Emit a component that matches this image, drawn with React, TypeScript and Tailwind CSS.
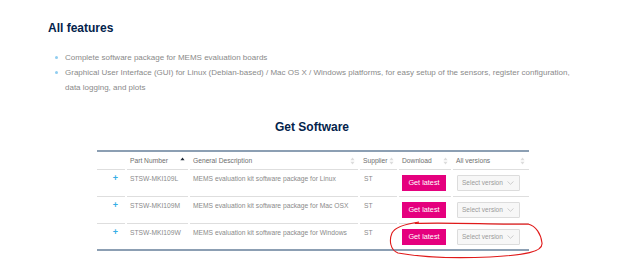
const rows = [
    { part: "STSW-MKI109L", desc: "MEMS evaluation kit software package for Linux" },
    { part: "STSW-MKI109M", desc: "MEMS evaluation kit software package for Mac OSX" },
    { part: "STSW-MKI109W", desc: "MEMS evaluation kit software package for Windows" },
]

const SortIcon = ({ active }: { active?: boolean }) => (
    <svg width="5" height="8" viewBox="0 0 5 8" className="shrink-0">
        <path d="M2.5 0.6 L4.6 3.2 H0.4Z" fill={active ? "#1f2937" : "#dcdcdc"} />
        {!active && <path d="M2.5 7.4 L4.6 4.8 H0.4Z" fill="#dcdcdc" />}
    </svg>
)

const Chevron = () => (
    <svg width="7" height="4" viewBox="0 0 7 4">
        <polyline points="0.5,0.5 3.5,3.3 6.5,0.5" fill="none" stroke="#c4c4c4" strokeWidth="0.8" />
    </svg>
)

const HeadCell = ({ label, active, last }: { label?: string; active?: boolean; last?: boolean }) => (
    <th className="h-[18px] border-b border-[#dedede] p-0 align-middle font-normal">
        {label && (
            <div className={`flex items-center justify-between pl-[3px] ${last ? "pr-[4px]" : "pr-[3px]"}`}>
                <span className="text-[6.7px] leading-[9px] text-[#6e6e6e]">{label}</span>
                <SortIcon active={active} />
            </div>
        )}
    </th>
)

const App = () => {
    return (
        <div className="relative h-[269px] w-[624px] overflow-hidden bg-white pt-[20px] pl-[48px] pr-[40px] font-['Liberation_Sans',Arial,sans-serif]">
            <h2 className="text-[12px] leading-[16px] font-bold text-[#03234b]">All features</h2>

            <ul className="mt-[14px] text-[8px] leading-[15px] text-[#8a8a8a]">
                <li className="flex">
                    <span className="mt-[6px] ml-[6.5px] mr-[7.5px] h-[3px] w-[3px] shrink-0 rounded-full bg-[#8fcdf0]" />
                    <span>Complete software package for MEMS evaluation boards</span>
                </li>
                <li className="flex">
                    <span className="mt-[6px] ml-[6.5px] mr-[7.5px] h-[3px] w-[3px] shrink-0 rounded-full bg-[#8fcdf0]" />
                    <span>
                        Graphical User Interface (GUI) for Linux (Debian-based) / Mac OS X / Windows platforms, for easy setup of the sensors, register configuration, data logging, and plots
                    </span>
                </li>
            </ul>

            <h3 className="-ml-[8px] mt-[24px] text-center text-[12px] leading-[16px] font-bold text-[#03234b]">Get Software</h3>

            {/* tabella download */}
            <div className="mt-[15px] ml-[49px] w-[432px] border-t-2 border-b-2 border-[#8c9fb3]">
                <table className="-mx-[2px] w-[436px] table-fixed border-separate border-spacing-x-[2px] border-spacing-y-0">
                    <colgroup>
                        <col className="w-[28px]" />
                        <col className="w-[61px]" />
                        <col className="w-[168px]" />
                        <col className="w-[37px]" />
                        <col className="w-[52px]" />
                        <col className="w-[76px]" />
                    </colgroup>
                    <thead>
                        <tr>
                            <HeadCell />
                            <HeadCell label="Part Number" active />
                            <HeadCell label="General Description" />
                            <HeadCell label="Supplier" />
                            <HeadCell label="Download" />
                            <HeadCell label="All versions" last />
                        </tr>
                    </thead>
                    <tbody>
                        {rows.map((r, i) => {
                            const isLast = i === rows.length - 1
                            const cell = `p-0 align-top ${isLast ? "h-[25px]" : "h-[27px] border-b border-[#dedede]"}`
                            return (
                                <tr key={r.part}>
                                    <td className={`${cell} pt-[3px] pr-[7px] text-right text-[9px] leading-[10px] font-bold text-[#35aee6]`}>+</td>
                                    <td className={`${cell} pt-[4px] pl-[3px] text-[6.7px] leading-[9px] text-[#8a8a8a]`}>{r.part}</td>
                                    <td className={`${cell} pt-[4px] pl-[3px] text-[6.7px] leading-[9px] text-[#8a8a8a] whitespace-nowrap`}>{r.desc}</td>
                                    <td className={`${cell} pt-[4px] pl-[4px] text-[6.7px] leading-[9px] text-[#8a8a8a]`}>ST</td>
                                    <td className={`${cell} pt-[5px] pl-[3px]`}>
                                        <button className="flex h-[16px] w-[44px] items-center justify-center bg-[#e5007e] text-[7.3px] text-white">
                                            Get latest
                                        </button>
                                    </td>
                                    <td className={`${cell} pt-[5px] pl-[4px]`}>
                                        <div className="flex h-[16px] w-[63px] items-center justify-between rounded-[1px] border border-[#dcdcdc] bg-[#f7f7f7] pl-[4px] pr-[5px]">
                                            <span className="text-[6.5px] text-[#9a9a9a]">Select version</span>
                                            <Chevron />
                                        </div>
                                    </td>
                                </tr>
                            )
                        })}
                    </tbody>
                </table>
            </div>

            {/* annotazione a mano */}
            <svg className="pointer-events-none absolute top-0 left-0" width="624" height="269" viewBox="0 0 624 269">
                <path
                    d="M415 223.5 C450 222, 500 225, 528 224 C536 226, 541 234, 542 243 C543 252, 525 255, 490 257 C455 258.5, 420 257, 398 253 C390 250, 389 240, 392 233 C395 227, 405 224, 419 222"
                    fill="none"
                    stroke="#e01a1a"
                    strokeWidth="1.1"
                />
            </svg>
        </div>
    )
}

export default App
